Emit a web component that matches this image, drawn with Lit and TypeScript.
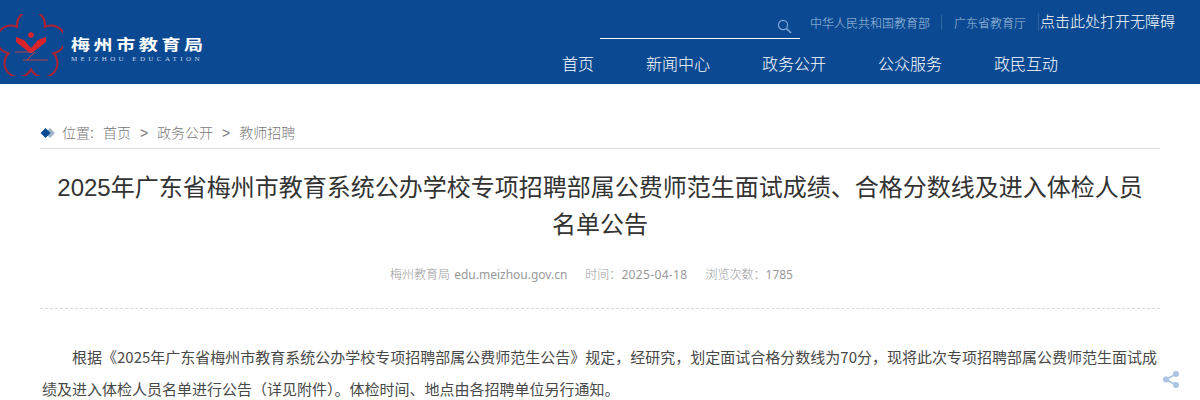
import { LitElement, html, css } from "lit";
import { customElement } from "lit/decorators.js";

@customElement("app-root")
export class AppRoot extends LitElement {
  static styles = css`
    :host { display: block; height: 400px; overflow: hidden; position: relative; background: #fff;
      font-family: "Liberation Sans", "Noto Sans CJK SC", sans-serif; }
    .header { height: 84px; background: #0b4a92; display: flex; justify-content: space-between; }
    .logo { display: flex; align-items: flex-start; height: 84px; }
    .logo svg { display: block; margin: 14px 0 0 -1px; }
    .brand { margin-left: 8px; margin-top: 33px; color: #fff; }
    .brand-cn { font-family: "Noto Sans CJK SC", sans-serif; font-size: 15px; font-weight: 700; letter-spacing: 2.8px; line-height: 22px; white-space: nowrap; transform: scaleX(1.27); transform-origin: left center; }
    .brand-en { font-family: "Liberation Serif", serif; font-size: 7px; letter-spacing: 3.4px; line-height: 9px; margin-top: 0; color: #c7d6e8; white-space: nowrap; }
    .right { width: 600px; display: flex; flex-direction: column; }
    .top { display: flex; height: 39px; }
    .search { width: 200px; height: 39px; box-sizing: border-box; border-bottom: 1px solid #fff; display: flex; justify-content: flex-end; align-items: flex-start; padding: 19px 8px 0 0; }
    .links { display: flex; align-items: flex-start; font-family: "Noto Sans CJK SC", sans-serif; font-weight: 300; font-size: 12px; color: #a6c0de; margin-left: 10px; padding-top: 15px; line-height: 16px; white-space: nowrap; }
    .sep { width: 1px; height: 15px; background: #2f659f; margin: 0 12px 0 11px; }
    .sep.b { margin: -1px 0 0 12px; height: 17px; }
    .access { font-family: "Noto Sans CJK SC", sans-serif; font-weight: 300; color: #fff; font-size: 15px; line-height: 18px; padding: 12px 0 0 1px; white-space: nowrap; }
    .nav { display: flex; gap: 52px; padding: 13px 0 0 0; margin-left: -38px; font-family: "Noto Sans CJK SC", sans-serif; font-weight: 300; font-size: 16px; line-height: 22px; color: #fff; white-space: nowrap; }
    .main { padding: 0 40px; }
    .crumb { height: 65px; box-sizing: border-box; border-bottom: 1px solid #ddd; display: flex; align-items: center; gap: 7px; padding-top: 33px; font-family: "Liberation Sans", "Noto Sans CJK SC", sans-serif; font-weight: 300; font-size: 14px; color: #777; white-space: nowrap; }
    .crumb .items { display: flex; align-items: baseline; gap: 9px; line-height: 20px; }
    h1 { margin: 20px 0 0; padding: 0 15px; font-weight: 400; font-size: 24px; line-height: 37px; text-align: center; color: #333; font-family: "Liberation Sans", "Noto Sans CJK SC", sans-serif; }
    .meta { display: flex; justify-content: center; gap: 18px; padding-right: 17px; margin-top: 21px; height: 22px; font-family: "Noto Sans", "Noto Sans CJK SC", sans-serif; font-weight: 300; font-size: 12px; line-height: 22px; color: #999; white-space: nowrap; word-spacing: 1px; }
    .meta .lat { font-weight: 400; }
    .date { letter-spacing: 0.35px; }
    .dash { border-top: 1px dashed #d8d8d8; margin-top: 22px; }
    .body { margin: 32px 0 0 2px; font-family: "Noto Sans CJK SC", sans-serif; font-size: 15px; line-height: 32px; color: #484848; text-indent: 30px; overflow: hidden; }
    .share { position: absolute; left: 1163px; top: 371px; }
  `;

  render() {
    return html`
      <div class="header">
        <div class="logo">
          <svg width="64" height="62" viewBox="-1 -1 64 62">
            <path d="M17.160 11.950A14 14 0 1 1 44.840 11.950A14 14 0 1 1 53.400 38.300A14 14 0 1 1 31 54.550A14 14 0 1 1 8.600 38.300A14 14 0 1 1 17.160 11.950Z" fill="none" stroke="#b0202e" stroke-width="2"/>
            <circle cx="31" cy="20" r="2.800" fill="#d8232a"/>
            <path d="M16 22l8 3 7 8 7-8 8-3v5L32 38h-2L16 27z" fill="#d8232a"/>
            <path d="M15 37h18M23 45h25M35 37l-8 8" stroke="#c24048" stroke-width="1" fill="none"/>
          </svg>
          <div class="brand">
            <div class="brand-cn">梅州市教育局</div>
            <div class="brand-en">MEIZHOU EDUCATION</div>
          </div>
        </div>
        <div class="right">
          <div class="top">
            <div class="search">
              <svg width="15" height="15" viewBox="0 0 15 15" fill="none" stroke="#7fa6d6" stroke-width="1.2"><circle cx="6" cy="6" r="4.600"/><path d="M9.500 9.500l4.500 4.500" stroke-width="1.600"/></svg>
            </div>
            <div class="links"><span>中华人民共和国教育部</span><span class="sep"></span><span>广东省教育厅</span><span class="sep b"></span></div>
            <div class="access">点击此处打开无障碍</div>
          </div>
          <div class="nav"><span>首页</span><span>新闻中心</span><span>政务公开</span><span>公众服务</span><span>政民互动</span></div>
        </div>
      </div>
      <div class="main">
        <div class="crumb">
          <svg width="15" height="10" viewBox="0 0 15 10"><path d="M10 0l5 5-5 5-5-5z" fill="#9fb3cc"/><path d="M5.500 0l5 5-5 5-5-5z" fill="#0b4a92"/></svg>
          <div class="items"><span>位置:</span><span>首页</span><span>&gt;</span><span>政务公开</span><span>&gt;</span><span>教师招聘</span></div>
        </div>
        <h1>2025年广东省梅州市教育系统公办学校专项招聘部属公费师范生面试成绩、合格分数线及进入体检人员名单公告</h1>
        <div class="meta"><span>梅州教育局 <span class="lat">edu.meizhou.gov.cn</span></span><span>时间：<span class="lat date">2025-04-18</span></span><span>浏览次数：<span class="lat">1785</span></span></div>
        <div class="dash"></div>
        <div class="body">根据《2025年广东省梅州市教育系统公办学校专项招聘部属公费师范生公告》规定，经研究，划定面试合格分数线为70分，现将此次专项招聘部属公费师范生面试成绩及进入体检人员名单进行公告（详见附件）。体检时间、地点由各招聘单位另行通知。</div>
      </div>
      <svg class="share" width="16" height="17" viewBox="0 0 16 17" fill="#a9c4e4"><circle cx="13" cy="3" r="3"/><circle cx="3" cy="8.500" r="3"/><circle cx="13" cy="14" r="3"/><path d="M13 3L3 8.500 13 14" fill="none" stroke="#a9c4e4" stroke-width="1.800"/></svg>
    `;
  }
}
